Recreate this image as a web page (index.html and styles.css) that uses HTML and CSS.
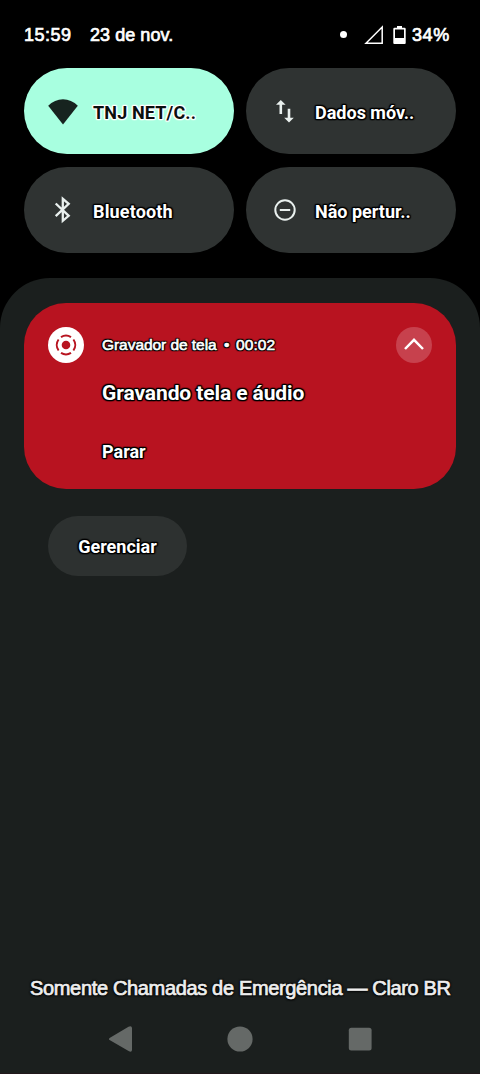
FILE: index.html
```html
<!DOCTYPE html>
<html lang="pt-BR">
<head>
<meta charset="utf-8">
<title>Notificações</title>
<link rel="stylesheet" href="styles.css">
</head>
<body>
<div class="screen">
  <header class="status">
    <span class="time">15:59</span>
    <span class="date">23 de nov.</span>
    <span class="dot"></span>
    <svg class="signal" width="20" height="20" viewBox="0 0 20 20"><path d="M18.2 2v16.2H2z" fill="none" stroke="#fff" stroke-width="1.5"/></svg>
    <svg class="battery" width="13" height="18" viewBox="0 0 13 18"><path fill="#fff" fill-rule="evenodd" d="M4 0h5v1.800h2.500q1.200 0 1.200 1.200v14q0 1-1 1H1.300q-1 0-1-1V3q0-1.200 1.200-1.200H4zM2 3.500V12h9V3.500z"/></svg>
    <span class="percent">34%</span>
  </header>

  <main class="tiles">
    <div class="tile tile-on">
      <svg class="icon" width="30" height="30" viewBox="0 0 30 30"><path fill="#17231f" d="M15 28.500L.2 9.800Q6.600 3.300 15 3.300T29.800 9.800z"/></svg>
      <span class="label wifi">TNJ NET/C..</span>
    </div>
    <div class="tile">
      <svg class="icon" width="30" height="30" viewBox="0 0 30 30"><g fill="#e9f0ee"><path d="M10.800 4l4.800 4.800h-3.500V18H9.500V8.800H6z"/><path d="M19 26.500l-4.800-4.800h3.500v-9h2.600v9h3.500z"/></g></svg>
      <span class="label data">Dados móv..</span>
    </div>
    <div class="tile">
      <svg class="icon" width="30" height="30" viewBox="0 0 30 30"><path d="M7.700 8.500l13 12.300-5.900 5V3.800l5.900 5-13 12.300" fill="none" stroke="#e9f0ee" stroke-width="2.300"/></svg>
      <span class="label bt">Bluetooth</span>
    </div>
    <div class="tile">
      <svg class="icon" width="30" height="30" viewBox="0 0 30 30"><g fill="none" stroke="#e9f0ee" stroke-width="2"><circle cx="15" cy="15" r="9.700"/><path d="M9.800 15h10.400"/></g></svg>
      <span class="label dnd">Não pertur..</span>
    </div>
  </main>

  <section class="shade">
    <article class="card">
      <div class="card-head">
        <svg class="recorder" width="36" height="36" viewBox="0 0 36 36"><circle cx="18" cy="18" r="18" fill="#fff"/><circle cx="18" cy="18" r="4.300" fill="#b81420"/><path fill="none" stroke="#b81420" stroke-width="2" d="M13 10.200a9.200 9.200 0 0 1 10 0M13 25.800a9.200 9.200 0 0 0 10 0M10.600 12.500a9.200 9.200 0 0 0 0 11M25.400 12.500a9.200 9.200 0 0 1 0 11"/></svg>
        <span class="app">Gravador de tela</span>
        <span class="bullet">•</span>
        <span class="elapsed">00:02</span>
        <svg class="collapse" width="36" height="36" viewBox="0 0 36 36"><circle cx="18" cy="18" r="18" fill="#c7414d"/><path d="M9 22l9-9.200 9 9.200" fill="none" stroke="#fff" stroke-width="2.500"/></svg>
      </div>
      <h1 class="title"><span>Gravando tela e áudio</span></h1>
      <div class="stop"><span>Parar</span></div>
    </article>
    <div class="manage"><span>Gerenciar</span></div>
    <footer class="bottom">
      <div class="carrier">Somente Chamadas de Emergência — Claro BR</div>
      <nav class="nav">
        <svg width="26" height="26" viewBox="0 0 26 26"><path d="M3 11.700L21.500.8Q24.800-.5 25 2v22q-.2 2.500-3 1.300L3 14.300q-2.200-1.300 0-2.600z" fill="#656967"/></svg>
        <svg width="26" height="26" viewBox="0 0 26 26"><circle cx="13" cy="13" r="12.600" fill="#656967"/></svg>
        <svg width="26" height="26" viewBox="0 0 26 26"><rect x="1.800" y="1.800" width="22.800" height="22.800" rx="2.500" fill="#656967"/></svg>
      </nav>
    </footer>
  </section>
</div>
</body>
</html>
```
FILE: styles.css
```css
* { box-sizing: border-box; }
body { margin: 0; background: #000; }

.screen {
  width: 480px;
  height: 1074px;
  display: flex;
  flex-direction: column;
  background: #000;
  color: #fff;
  font-family: "Liberation Sans", Arial, sans-serif;
  white-space: nowrap;
  overflow: hidden;
}

.status {
  height: 68px;
  padding: 1px 0 0 24px;
  display: flex;
  align-items: center;
  font-size: 18px;
  line-height: 22px;
  -webkit-text-stroke: .7px #fff;
}
.time { width: 66px; letter-spacing: .5px; }
.date { width: 250px; letter-spacing: .05px; }
.dot { width: 7px; height: 7px; border-radius: 50%; background: #fff; }
.signal { margin-left: 17px; }
.battery { margin-left: 9px; }
.percent { margin-left: 6px; letter-spacing: .6px; }
.time, .date, .percent { padding-top: 1px; }

.tiles {
  padding: 0 24px;
  display: grid;
  grid-template-columns: 210px 210px;
  grid-auto-rows: 86px;
  gap: 13px 12px;
}
.tile {
  padding: 0 0 0 24px;
  display: flex;
  align-items: center;
  border-radius: 43px;
  background: #2f3332;
}
.tile-on { background: #a8ffe0; }
.icon { margin-right: 15px; }

.label, .title, .stop, .manage {
  font-family: Roboto, sans-serif;
  font-weight: 700;
  text-shadow: 1px 0 1px #000, -1px 0 1px #000, 0 1px 1px #000, 0 -1px 1px #000, 1px 1px 1px #000, -1px -1px 1px #000, 1px -1px 1px #000, -1px 1px 1px #000, 0 0 2px #000, 0 0 2px #000;
}
.label { font-size: 18px; line-height: 22px; padding-top: 3px; }
.wifi, .bt { letter-spacing: .15px; }
.tile-on .label {
  color: #0b0f0e;
  text-shadow: 1px 0 1px #fff, -1px 0 1px #fff, 0 1px 1px #fff, 0 -1px 1px #fff, 1px 1px 1px #fff, -1px -1px 1px #fff, 1px -1px 1px #fff, -1px 1px 1px #fff, 0 0 2px #fff, 0 0 2px #fff;
}

.shade {
  margin-top: 25px;
  padding: 25px 24px 0;
  flex: 1;
  display: flex;
  flex-direction: column;
  align-items: flex-start;
  border-radius: 50px 50px 0 0;
  border-bottom: 1px solid #21171b;
  background: #1b1f1e;
}
.card {
  width: 432px;
  height: 186px;
  padding: 24px 24px 0;
  border-radius: 42px;
  background: #b81320;
}
.card-head {
  display: flex;
  align-items: center;
  font-size: 15.500px;
  line-height: 20px;
}
.app, .bullet, .elapsed {
  -webkit-text-stroke: .6px #fff;
  text-shadow: 1px 0 1px #000, -1px 0 1px #000, 0 1px 1px #000, 0 -1px 1px #000, 1px 1px 1px #000, -1px -1px 1px #000, 1px -1px 1px #000, -1px 1px 1px #000, 0 0 2px #000;
}
.app { margin-left: 18px; width: 122px; letter-spacing: -.05px; }
.bullet { width: 12px; }
.elapsed { letter-spacing: .1px; }
.collapse { margin-left: auto; }
.title { margin: 17px 0 0 54px; font-size: 21px; line-height: 26px; letter-spacing: -.1px; }
.stop { margin: 35px 0 0 54px; font-size: 18px; line-height: 22px; }
.manage {
  width: 139px;
  height: 60px;
  margin: 27px 0 0 24px;
  display: flex;
  align-items: center;
  justify-content: center;
  border-radius: 30px;
  background: #2d3130;
  font-size: 18px;
}
.bottom { width: 432px; margin-top: auto; }
.carrier {
  padding-left: 6px;
  font-size: 20px;
  line-height: 24px;
  letter-spacing: -.34px;
  color: #eee;
  -webkit-text-stroke: .7px #eee;
  text-shadow: 0 0 2px #000, 0 0 2px #000, 0 0 3px #000, 0 1px 2px #000;
}
.nav {
  height: 73px;
  padding: 26px 83px 0;
  display: flex;
  justify-content: space-between;
}
```
